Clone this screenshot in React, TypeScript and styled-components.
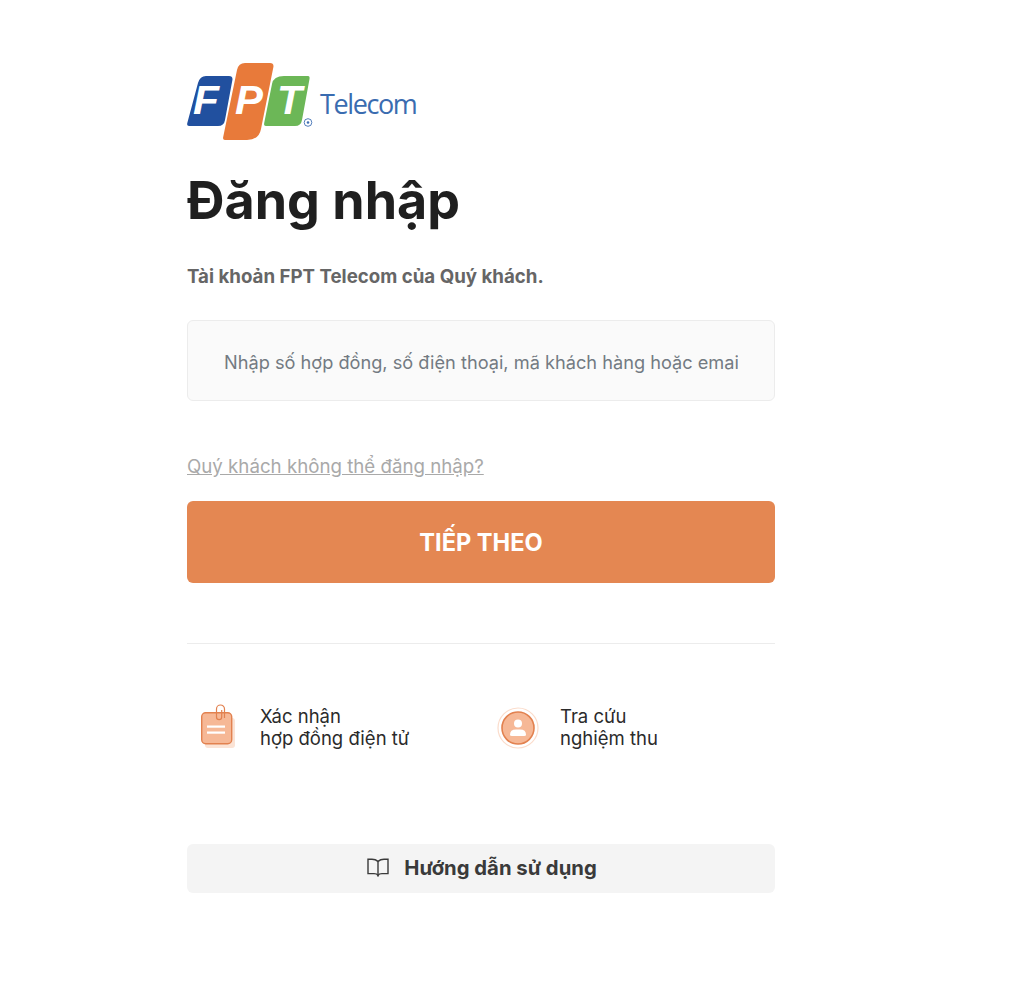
import styled, { createGlobalStyle } from 'styled-components'

const GlobalStyle = createGlobalStyle`
	html, body {
		margin: 0;
		padding: 0;
		background: #fff;
		font-family: Inter, 'Liberation Sans', Arial, sans-serif;
	}
	* {
		box-sizing: border-box;
	}
`

function FptLogo() {
	return (
		<LogoMark viewBox='0 0 126 77' width='126' height='77' aria-label='FPT'>
			<path
				d='M19 13 H42 Q46 13 45.4 17 L38 57 Q37 63 31 63 H2 Q-0.5 63 0.3 60 L11 20 Q13 13 19 13 Z'
				fill='#21509f'
			/>
			<path
				d='M58 0 H83 Q87 0 86.4 4 L74 66 Q72 77 60 77 H38 Q35.5 77 36.2 74 L50 7 Q51.5 0 58 0 Z'
				fill='#e87a3a'
			/>
			<path
				d='M97 13 H121 Q123 13 122.5 16 L115 57 Q114 63 108 63 H79 Q76.5 63 77.2 60 L85 21 Q86.5 13 97 13 Z'
				fill='#6cb757'
			/>
			<LogoLetter x='6' y='51' fontSize='40' textLength='26' lengthAdjust='spacingAndGlyphs'>F</LogoLetter>
			<LogoLetter x='48' y='51' fontSize='40' textLength='28' lengthAdjust='spacingAndGlyphs'>P</LogoLetter>
			<LogoLetter x='90' y='51' fontSize='40' textLength='25' lengthAdjust='spacingAndGlyphs'>T</LogoLetter>
			<circle cx='121' cy='59.5' r='3.8' fill='none' stroke='#3f6fb3' strokeWidth='0.9' />
			<circle cx='121' cy='59.5' r='1.3' fill='#3f6fb3' />
		</LogoMark>
	)
}

function ClipNoteIcon() {
	return (
		<svg width='38' height='46' viewBox='0 0 38 46' fill='none'>
			<rect x='6' y='14' width='30' height='30' rx='3' fill='#fbe3d5' />
			<rect x='2.7' y='8.7' width='30' height='31' rx='4' fill='#f6b896' stroke='#e2814f' strokeWidth='1.4' />
			<path d='M25.5 14 V5 a4 4 0 0 0 -8 0 V13 a2.6 2.6 0 0 0 5.2 0 V6' stroke='#e2814f' strokeWidth='1.2' />
			<rect x='8' y='21.5' width='18' height='2.2' fill='#fff' />
			<rect x='8' y='27.5' width='18' height='2.2' fill='#fff' />
		</svg>
	)
}

function UserBadgeIcon() {
	return (
		<svg width='42' height='44' viewBox='0 0 42 44' fill='none'>
			<g transform='translate(0 2)'>
				<circle cx='21' cy='21' r='20' stroke='#fbdccb' strokeWidth='1.2' />
				<circle cx='21' cy='21' r='16' fill='#f6b896' stroke='#e2814f' strokeWidth='1.6' />
				<circle cx='21' cy='16.5' r='4' fill='#fff' />
				<path d='M13 28 Q13 22.6 19 22.6 H23 Q29 22.6 29 28 Q29 29 27 29 H15 Q13 29 13 28 Z' fill='#fff' />
			</g>
		</svg>
	)
}

function BookIcon() {
	return (
		<svg width='22' height='19' viewBox='0 0 22 19' fill='none' stroke='#3a3a3a' strokeWidth='1.4'>
			<path d='M11 3.4 Q8.5 1.2 5 1.2 H1 V15.6 H7 Q10 15.6 11 17.4 Q12 15.6 15 15.6 H21 V1.2 H17 Q13.5 1.2 11 3.4 Z' />
			<path d='M11 3.4 V18.6' />
		</svg>
	)
}

export default function App() {
	return (
		<Page>
			<GlobalStyle />
			<Column>
				<LogoRow>
					<FptLogo />
					<LogoText>Telecom</LogoText>
				</LogoRow>
				<Title>Đăng nhập</Title>
				<Subtitle>Tài khoản FPT Telecom của Quý khách.</Subtitle>
				<AccountInput placeholder='Nhập số hợp đồng, số điện thoại, mã khách hàng hoặc email' />
				<HelpLink href='#'>Quý khách không thể đăng nhập?</HelpLink>
				<SubmitButton type='button'>TIẾP THEO</SubmitButton>
				<Divider />
				<Shortcuts>
					<Shortcut>
						<ShortcutIcon>
							<ClipNoteIcon />
						</ShortcutIcon>
						<ShortcutLabel>
							Xác nhận
							<br />
							hợp đồng điện tử
						</ShortcutLabel>
					</Shortcut>
					<Shortcut>
						<ShortcutIcon>
							<UserBadgeIcon />
						</ShortcutIcon>
						<ShortcutLabel>
							Tra cứu
							<br />
							nghiệm thu
						</ShortcutLabel>
					</Shortcut>
				</Shortcuts>
				<GuideButton type='button'>
					<BookIcon />
					Hướng dẫn sử dụng
				</GuideButton>
			</Column>
		</Page>
	)
}

const Page = styled.div`
	min-height: 1001px;
	padding: 63px 0 0 187px;
`

const Column = styled.main`
	display: flex;
	flex-direction: column;
	width: 588px;
`

const LogoRow = styled.div`
	display: flex;
	align-items: center;
	height: 77px;
	gap: 7px;
`

const LogoMark = styled.svg`
	flex: none;
`

const LogoLetter = styled.text`
	fill: #fff;
	font-family: 'Liberation Sans', Arial, sans-serif;
	font-weight: 700;
	font-style: italic;
`

const LogoText = styled.span`
	font-family: 'Open Sans', sans-serif;
	font-size: 27px;
	font-weight: 500;
	letter-spacing: -1.4px;
	color: #3a6cb0;
	margin-top: 3px;
`

const Title = styled.h1`
	margin: 28px 0 0;
	font-size: 52px;
	line-height: 66px;
	font-weight: 700;
	color: #1f1f1f;
`

const Subtitle = styled.p`
	margin: 31px 0 0;
	font-size: 18.7px;
	line-height: 24px;
	font-weight: 700;
	color: #666;
`

const AccountInput = styled.input`
	margin-top: 31px;
	width: 100%;
	height: 81px;
	padding: 2px 36px 0;
	background: #fafafa;
	border: 1px solid #ececec;
	border-radius: 6px;
	font-family: inherit;
	font-size: 18.2px;
	outline: none;

	&::placeholder {
		color: #737a82;
		opacity: 1;
	}
`

const HelpLink = styled.a`
	margin-top: 54px;
	font-size: 18.7px;
	line-height: 24px;
	color: #a9a9a9;
	text-decoration: underline;
`

const SubmitButton = styled.button`
	margin-top: 22px;
	height: 82px;
	padding-top: 2px;
	border: none;
	border-radius: 6px;
	background: #e48752;
	color: #fff;
	font-family: inherit;
	font-size: 23.6px;
	font-weight: 700;
`

const Divider = styled.hr`
	margin: 60px 0 0;
	height: 1px;
	border: none;
	background: #ececec;
`

const Shortcuts = styled.div`
	display: grid;
	grid-template-columns: 300px 1fr;
	margin-top: 60px;
`

const Shortcut = styled.div`
	display: flex;
	align-items: center;
	height: 46px;
	gap: 21px;
`

const ShortcutIcon = styled.div`
	display: flex;
	justify-content: center;
	width: 52px;
	padding-left: 10px;
`

const ShortcutLabel = styled.div`
	font-size: 18.5px;
	line-height: 22px;
	color: #2b2b2b;
`

const GuideButton = styled.button`
	display: flex;
	align-items: center;
	justify-content: center;
	gap: 15px;
	margin-top: 94px;
	height: 49px;
	padding: 0 0 2px 2px;
	border: none;
	border-radius: 6px;
	background: #f4f4f4;
	color: #3a3a3a;
	font-family: inherit;
	font-size: 20.3px;
	font-weight: 700;
`
